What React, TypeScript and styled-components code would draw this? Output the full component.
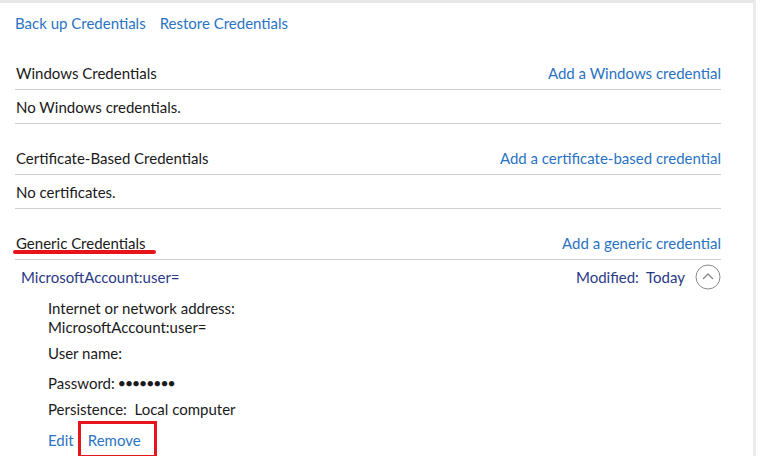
import React from "react";
import styled, { createGlobalStyle } from "styled-components";

const Global = createGlobalStyle`
  html, body { margin: 0; background: #fff; }
  body { font-family: Lato, "Noto Sans", sans-serif; font-size: 15px; color: #1a1a1a; }
`;

const Page = styled.div`
  width: 756px; height: 456px; box-sizing: border-box;
  border-top: 3px solid #e6e6e6; border-right: 3px solid #ececec;
  padding: 9px 32px 0 15px; display: flex; flex-direction: column; overflow: hidden;
`;
const TopLinks = styled.div`display: flex; gap: 14px; height: 22px; align-items: center; margin-bottom: 23px;`;
const Link = styled.a`color: #2a73c4; text-decoration: none; cursor: pointer;`;
const Header = styled.div`
  position: relative; display: flex; justify-content: space-between; align-items: center;
  height: 34px; border-bottom: 1px solid #cfcfcf; box-sizing: border-box; padding-left: 1px;
`;
const Underline = styled.span`
  position: absolute; left: -2px; bottom: 5px; width: 143px; height: 4px; border-radius: 2px; background: #e8141c;
`;
const Empty = styled.div`
  height: 33px; display: flex; align-items: center; border-bottom: 1px solid #cfcfcf; margin-bottom: 18px; padding-left: 1px;
`;
const ItemRow = styled.div`
  height: 34px; display: flex; justify-content: space-between; align-items: center; color: #2b3a86; padding-left: 6px;
`;
const Right = styled.div`display: flex; align-items: center; gap: 10px;`;
const Details = styled.div`padding-left: 33px; display: flex; flex-direction: column;`;
const Line = styled.div<{ h: number }>`height: ${p => p.h}px; display: flex; align-items: center;`;
const Dots = styled.span`font-size: 11px; letter-spacing: 0.5px;`;
const Actions = styled.div`display: flex; gap: 14px; align-items: center; height: 32px; margin-top: 2px;`;
const Boxed = styled.span`
  position: relative;
  &::after { content: ""; position: absolute; left: -10px; right: -16px; top: -10px; bottom: -9px; border: 3px solid #e8141c; }
`;

export default function App() {
  return (
    <>
      <Global />
      <Page>
        <TopLinks><Link>Back up Credentials</Link><Link>Restore Credentials</Link></TopLinks>
        <Header><span>Windows Credentials</span><Link>Add a Windows credential</Link></Header>
        <Empty>No Windows credentials.</Empty>
        <Header><span>Certificate-Based Credentials</span><Link>Add a certificate-based credential</Link></Header>
        <Empty>No certificates.</Empty>
        <Header><span>Generic Credentials</span><Link>Add a generic credential</Link><Underline /></Header>
        <ItemRow>
          <span>MicrosoftAccount:user=</span>
          <Right>
            <span>Modified:&nbsp; Today</span>
            <svg width="26" height="26" viewBox="0 0 26 26">
              <circle cx="13" cy="13" r="12" fill="none" stroke="#8a8a8a" strokeWidth="1" />
              <path d="M8 15 L13 10 L18 15" fill="none" stroke="#8a8a8a" strokeWidth="1.3" />
            </svg>
          </Right>
        </ItemRow>
        <Details>
          <Line h={20} style={{ marginTop: 4 }}>Internet or network address:</Line>
          <Line h={18}>MicrosoftAccount:user=</Line>
          <Line h={34}>User name:</Line>
          <Line h={26}>Password:&nbsp; <Dots>●●●●●●●●</Dots></Line>
          <Line h={26}>Persistence:&nbsp; Local computer</Line>
          <Actions><Link>Edit</Link><Boxed><Link>Remove</Link></Boxed></Actions>
        </Details>
      </Page>
    </>
  );
}
